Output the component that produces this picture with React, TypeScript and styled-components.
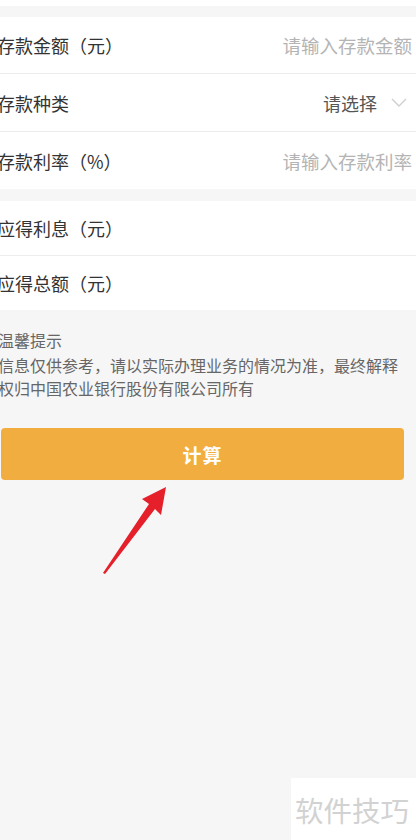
import React from 'react';
import styled, { createGlobalStyle } from 'styled-components';

const GlobalStyle = createGlobalStyle`
  html, body {
    margin: 0;
    padding: 0;
    background: #f6f6f6;
    overflow: hidden;
  }
  * {
    box-sizing: border-box;
  }
`;

const Page = styled.div`
  position: relative;
  width: 416px;
  height: 840px;
  background: #f6f6f6;
  font-family: 'Noto Sans CJK SC', 'Noto Sans', sans-serif;
  overflow: hidden;
`;

const TopStrip = styled.div`
  height: 6px;
  background: #ffffff;
  margin-bottom: 11px;
`;

const Group = styled.div<{ gap?: number }>`
  background: #ffffff;
  margin-bottom: ${(p) => p.gap ?? 0}px;
`;

const Row = styled.div<{ h: number; last?: boolean }>`
  display: flex;
  align-items: center;
  justify-content: space-between;
  height: ${(p) => p.h}px;
  padding-right: 4px;
  border-bottom: ${(p) => (p.last ? 'none' : '1px solid #ececec')};
`;

const Label = styled.span`
  margin-left: -3px;
  font-size: 18px;
  color: #333333;
  white-space: nowrap;
`;

const Placeholder = styled.span`
  font-size: 18.5px;
  color: #b4b4b4;
  white-space: nowrap;
`;

const SelectBox = styled.div`
  display: flex;
  align-items: center;
  gap: 14px;
  margin-right: 5px;
`;

const SelectText = styled.span`
  font-size: 18px;
  color: #555555;
`;

const Tips = styled.div`
  padding: 18px 2px 0 0;
  margin-left: -2px;
  color: #666666;
  font-size: 16px;
`;

const TipTitle = styled.div`
  line-height: 24px;
  margin-bottom: 2px;
`;

const TipBody = styled.div`
  line-height: 23px;
  white-space: nowrap;
`;

const CalcButton = styled.button`
  display: block;
  margin: 28px 0 0 1px;
  width: 403px;
  height: 52px;
  border: none;
  border-radius: 4px;
  background: #f2ad40;
  color: #ffffff;
  font-family: inherit;
  font-size: 19px;
  font-weight: 700;
  letter-spacing: 1px;
`;

const Arrow = styled.svg`
  position: absolute;
  left: 98px;
  top: 482px;
`;

const Watermark = styled.div`
  position: absolute;
  right: 0;
  bottom: 0;
  width: 125px;
  height: 62px;
  background: #ffffff;
  display: flex;
  align-items: center;
  padding-left: 4px;
  font-size: 28.5px;
  color: #d2d2d2;
  white-space: nowrap;
`;

const Chevron = () => (
  <svg width="16" height="9" viewBox="0 0 16 9">
    <path d="M1 1 L8 8 L15 1" fill="none" stroke="#cfcfcf" strokeWidth="1.4" />
  </svg>
);

export default function App() {
  return (
    <Page>
      <GlobalStyle />
      <TopStrip />
      <Group gap={12}>
        <Row h={57}>
          <Label>存款金额（元）</Label>
          <Placeholder>请输入存款金额</Placeholder>
        </Row>
        <Row h={58}>
          <Label>存款种类</Label>
          <SelectBox>
            <SelectText>请选择</SelectText>
            <Chevron />
          </SelectBox>
        </Row>
        <Row h={57} last>
          <Label>存款利率（%）</Label>
          <Placeholder>请输入存款利率</Placeholder>
        </Row>
      </Group>
      <Group>
        <Row h={55}>
          <Label>应得利息（元）</Label>
        </Row>
        <Row h={54} last>
          <Label>应得总额（元）</Label>
        </Row>
      </Group>
      <Tips>
        <TipTitle>温馨提示</TipTitle>
        <TipBody>
          信息仅供参考，请以实际办理业务的情况为准，最终解释
          <br />
          权归中国农业银行股份有限公司所有
        </TipBody>
      </Tips>
      <CalcButton>计算</CalcButton>
      <Arrow width="80" height="100" viewBox="0 0 80 100">
        <path
          d="M68 5 L63 33 L57 27 L7 92 L5 91 L51 22 L44 17 Z"
          fill="#e5202a"
        />
      </Arrow>
      <Watermark>软件技巧</Watermark>
    </Page>
  );
}
